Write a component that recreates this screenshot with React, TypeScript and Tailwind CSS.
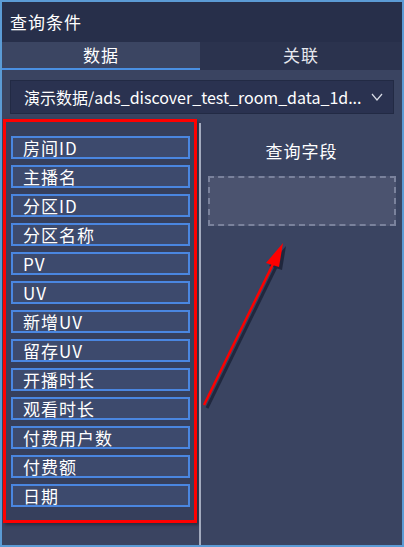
const fields = [
  "房间ID",
  "主播名",
  "分区ID",
  "分区名称",
  "PV",
  "UV",
  "新增UV",
  "留存UV",
  "开播时长",
  "观看时长",
  "付费用户数",
  "付费额",
  "日期",
];

const font = { fontFamily: '"Noto Sans CJK SC", "Noto Sans", sans-serif' };

export default function App() {
  return (
    <div
      className="relative w-[404px] h-[547px] overflow-hidden border-2 border-[#5b9bd5] bg-[#3a4461] flex flex-col text-white"
      style={font}
    >
      {/* Title */}
      <div className="h-[40px] shrink-0 bg-[#272f4a] flex items-center pl-[8px] text-[17px] tracking-[1px]">
        查询条件
      </div>

      {/* Tabs */}
      <div className="h-[28px] shrink-0 flex bg-[#2b334e]">
        <div className="w-[198px] flex items-center justify-center bg-[#3b4562] border-b-2 border-[#4a90e2] text-[17px] tracking-[1px]">
          数据
        </div>
        <div className="flex-1 flex items-center justify-center border-b-2 border-[#2b334e] text-[17px] tracking-[1px] text-[#e6e8ee]">
          关联
        </div>
      </div>

      {/* Table select */}
      <div className="mx-[8px] mt-[10px] h-[34px] shrink-0 flex items-center bg-[#2a3250] border border-[#222a44] pl-[13px] pr-[10px]">
        <span className="flex-1 text-[16px] whitespace-nowrap overflow-hidden">
          演示数据/ads_discover_test_room_data_1d...
        </span>
        <svg width="12" height="10" viewBox="0 0 12 10" className="shrink-0">
          <path d="M1 2 L6 8 L11 2" fill="none" stroke="#d8dce6" strokeWidth="1.2" />
        </svg>
      </div>

      {/* Panels */}
      <div className="flex-1 flex mt-[5px] min-h-0">
        <div className="w-[194px] h-[404px] ml-[1px] shrink-0 border-[3px] border-[#ff0000] bg-[#363f5c] flex flex-col gap-[6px] pt-[14px] pl-[5px] pr-[4px] shadow-[2px_2px_3px_rgba(0,0,0,0.35)]">
          {fields.map((f) => (
            <div
              key={f}
              className="h-[23px] shrink-0 flex items-center pl-[10px] bg-[#3d4a6d] border-2 border-[#4a86e0] text-[17px] tracking-[1px] leading-none"
            >
              {f}
            </div>
          ))}
        </div>

        <div className="w-[2px] ml-[2px] mt-[4px] bg-[#a3abbe] shrink-0" />

        <div className="flex-1 flex flex-col">
          <div className="mt-[19px] text-center text-[17px] tracking-[1px]">查询字段</div>
          <div className="mt-[12px] ml-[7px] mr-[6px] h-[50px] bg-[#4b536f] border-2 border-dashed border-[#7a829c]" />
        </div>
      </div>

      {/* Annotation arrow */}
      <svg
        className="absolute left-0 top-0 pointer-events-none"
        width="404"
        height="547"
        viewBox="0 0 404 547"
      >
        <g transform="translate(-2,-2)">
          <g transform="translate(3,3)" opacity="0.55">
            <line x1="204" y1="405" x2="274" y2="262" stroke="#0b1020" strokeWidth="3" />
            <polygon points="283,243 266,263 279,267" fill="#0b1020" />
          </g>
          <line x1="204" y1="405" x2="274" y2="262" stroke="#ff0000" strokeWidth="2.5" />
          <polygon points="283,243 266,263 279,267" fill="#ff0000" />
        </g>
      </svg>
    </div>
  );
}
